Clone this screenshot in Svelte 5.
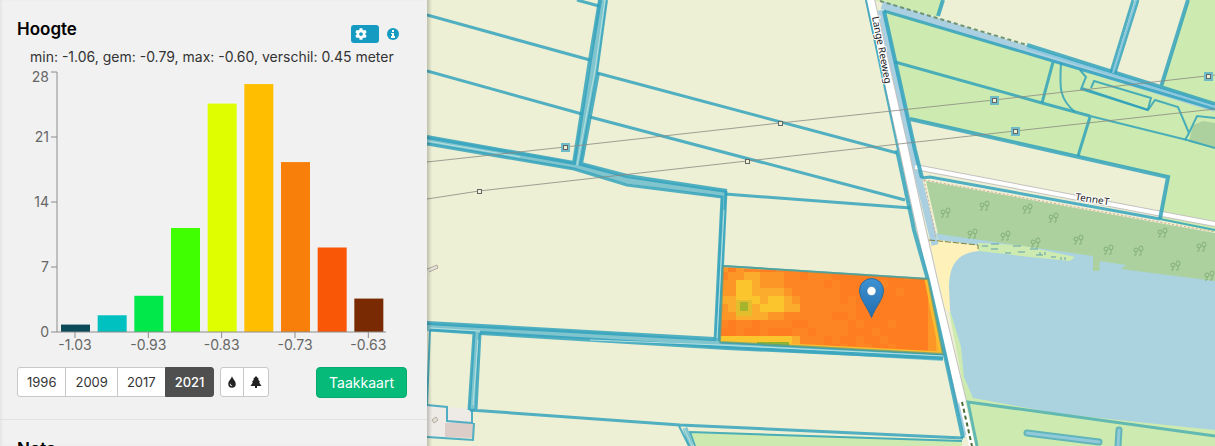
<script>
  const bars = [
    { label: '-1.03', value: 0.8, color: '#0b4a58' },
    { label: '', value: 1.8, color: '#00c0c0' },
    { label: '-0.93', value: 3.9, color: '#00e84a' },
    { label: '', value: 11.2, color: '#40ff00' },
    { label: '-0.83', value: 24.6, color: '#dfff00' },
    { label: '', value: 26.7, color: '#ffbf00' },
    { label: '-0.73', value: 18.3, color: '#f8800a' },
    { label: '', value: 9.1, color: '#f95706' },
    { label: '-0.63', value: 3.6, color: '#7a2a02' }
  ];
  const ticks = [0, 7, 14, 21, 28];
  const base = 265;
  const y = (v) => base - (v * 260) / 28;
  const barX = (i) => 61 + (i * 110) / 3;

  const years = ['1996', '2009', '2017', '2021'];
  let year = $state('2021');

  // Height raster of the selected parcel, one letter per cell.
  const tones = {
    a: '#fe8523', b: '#fe7d20', c: '#fc9626', d: '#fbac2c', e: '#fbc52e', g: '#cdbb2c', h: '#9ab52c'
  };
  const raster = [
    'cbcaabbaaabbbbbabbbbbbbbbbbb',
    'accddcccaabaaabbbbbbbbbabbdd',
    'cceedcccaaaaababbbbbabbbbbdd',
    'cceeddddcaaaaaabbbbbbbabbbdd',
    'ddeeedeedcaaaaababbbbbbbbbcd',
    'cdhgdeeeddaaaaaaabbbbbbbbbcd',
    'ccddddccaaaaaabbabbbbbbbbbcc',
    'abaabaaaabbaaaaababbbabbbbcc',
    'bbabbabbbaabaaaabbbabbbbbbcd',
    'eeeeeeeeedaaababbabbabbbbbcd',
    'eeeeeeeeedbaabbabaabbabbbbcd',
    'bbbbbbbbbbbbbbbbbbbbbbbbbbdd'
  ];
  const cells = raster.flatMap((row, r) =>
    [...row].map((t, c) => ({ x: 720 + c * 8, y: 264 + r * 8, fill: tones[t] }))
  );

  const trees = [
    [945, 213], [984, 206], [1027, 209], [1053, 218], [972, 234], [1005, 236], [1035, 243],
    [1078, 240], [1108, 250], [1138, 251], [1162, 233], [1201, 247], [1175, 266], [1209, 276]
  ];
  const pylons = [[479, 191], [747, 161], [780, 123]];
  const outlined = [[565, 147], [994, 100], [1015, 131], [1208, 76]];
</script>

<div class="app">
  <aside class="panel">
    <section class="block">
      <header class="head">
        <h2>Hoogte</h2>
        <div class="tools">
          <button class="gear" type="button" aria-label="Instellingen">
            <svg viewBox="0 0 512 512" width="12" height="12"><path fill="#fff" d="M487.4 315.7l-42.6-24.6c4.3-23.2 4.3-47 0-70.2l42.6-24.6c4.9-2.8 7.1-8.6 5.5-14-11.1-35.6-30-67.8-54.7-94.6-3.8-4.1-10-5.1-14.8-2.3L380.8 110c-17.9-15.4-38.5-27.3-60.8-35.1V25.8c0-5.6-3.9-10.5-9.4-11.7-36.7-8.2-74.3-7.8-109.2 0-5.5 1.2-9.4 6.1-9.4 11.7V75c-22.2 7.9-42.8 19.8-60.8 35.1L88.7 85.5c-4.9-2.8-11-1.9-14.8 2.3-24.7 26.7-43.6 58.9-54.7 94.6-1.7 5.4.6 11.2 5.5 14L67.3 221c-4.3 23.2-4.3 47 0 70.2l-42.6 24.6c-4.9 2.8-7.1 8.6-5.5 14 11.1 35.6 30 67.8 54.7 94.6 3.8 4.1 10 5.1 14.8 2.3l42.6-24.6c17.9 15.4 38.5 27.3 60.8 35.1v49.2c0 5.6 3.9 10.5 9.4 11.7 36.7 8.2 74.3 7.8 109.2 0 5.5-1.2 9.4-6.1 9.4-11.7v-49.2c22.2-7.9 42.8-19.8 60.8-35.1l42.6 24.6c4.9 2.8 11 1.9 14.8-2.3 24.7-26.7 43.6-58.9 54.7-94.6 1.5-5.5-.7-11.3-5.6-14.1zM256 336c-44.1 0-80-35.9-80-80s35.9-80 80-80 80 35.9 80 80-35.9 80-80 80z" /></svg>
          </button>
          <button class="info" type="button" aria-label="Informatie">
            <svg viewBox="0 0 12 12" width="12" height="12"><circle cx="6" cy="6" r="6" fill="#159bc2" /><path fill="#fff" d="M5 2H7V4H5ZM4 5H7V8H8V10H4V8H5V6H4Z" /></svg>
          </button>
        </div>
      </header>
      <p class="stats">min: -1.06, gem: -0.79, max: -0.60, verschil: 0.45 meter</p>

      <svg class="chart" viewBox="0 0 427 291" role="img" aria-label="Verdeling van de hoogte">
        {#each bars as bar, i}
          <rect x={barX(i)} y={y(bar.value)} width="29" height={base - y(bar.value)} fill={bar.color} />
          {#if bar.label}
            <path class="axis" d="M{barX(i) + 14} {base}v6" />
            <text x={barX(i) + 14} y="283" text-anchor="middle">{bar.label}</text>
          {/if}
        {/each}
        <path class="axis" d="M57 5V265H386" />
        {#each ticks as t}
          <path class="axis" d="M51 {y(t)}h6" />
          <text x="49" y={t === 28 ? 15 : y(t) + 5} text-anchor="end">{t}</text>
        {/each}
      </svg>

      <div class="controls">
        <div class="group">
          {#each years as item}
            <button type="button" class:active={item === year} onclick={() => (year = item)}>{item}</button>
          {/each}
        </div>
        <div class="group icons">
          <button type="button" aria-label="Water">
            <svg viewBox="0 0 12 14" width="10" height="12"><path fill="#222" fill-rule="evenodd" d="M6 0C7 3.500 10.500 5.500 10.500 9.300A4.500 4.500 0 0 1 1.500 9.300C1.500 5.500 5 3.500 6 0ZM3.300 9.200C3.300 11 4.500 12.200 6.200 12.200V11.200C5 11.200 4.300 10.400 4.300 9.200Z" /></svg>
          </button>
          <button type="button" aria-label="Bomen">
            <svg viewBox="0 0 12 14" width="12" height="14"><path fill="#222" d="M6 1 9 4.200H8L10.200 7.200H9L11.500 11H7V13H5V11H.5L3 7.200H1.800L4 4.200H3Z" /></svg>
          </button>
        </div>
        <button class="task" type="button">Taakkaart</button>
      </div>
    </section>
    <section class="block">
      <header class="head">
        <h2>Nota</h2>
      </header>
    </section>
  </aside>

  <main class="map">
    <svg viewBox="427 0 788 446" preserveAspectRatio="xMinYMin slice" role="img" aria-label="Kaart">
      <defs>
        <clipPath id="parcel"><path d="M723 267 928 279 943 354 720 342Z" /></clipPath>
        <linearGradient id="pin" x1="0" y1="0" x2="0" y2="1">
          <stop offset="0" stop-color="#3d92d2" /><stop offset="1" stop-color="#256eaf" />
        </linearGradient>
        <linearGradient id="edge"><stop offset="0" stop-color="#000" stop-opacity=".2" /><stop offset="1" stop-color="#000" stop-opacity="0" /></linearGradient>
        <g id="tree" fill="none" stroke="#83b078" stroke-width="1">
          <path d="M-2 4V0M-2 1a2 2 0 1 1 0-4a2 2 0 0 1 0 4M3 4V-1M3 0a2 2.500 0 1 1 0-5a2 2.500 0 0 1 0 5M-4 4h2M1 4h2" />
        </g>
      </defs>
      <rect x="427" width="788" height="446" fill="#edf0d5" />

      <g class="grass">
        <path d="M874 0H943L938 17Z" />
        <path d="M1188 0H1215V106L1161 88Z" />
        <path d="M884 10 1215 108V232L1160 220 1168 177 910 119Z" />
        <path d="M947 300 966 402 977 446H1215V270L1080 240Z" />
        <path d="M690 431 962 440V446H695Z" />
      </g>
      <path fill="#fff1ba" d="M929 238 985 246 975 300 949 312 945 308Z" />
      <path fill="#aad3df" d="M936 233 1060 250 1215 275V430L1060 414 973 398 964 377 961 347 950 310 949 285C950 267 955 253 979 251L978 245 938 240Z" />
      <path fill="#cdebb0" d="M978 243 1020 245 1075 257 1070 261 1030 257 978 251Z" />
      <path fill="#add19e" d="M926 181 1215 233V281L1121 269 1126 265 1100 261 1099 271 1093 271 1093 256 938 234Z" />
      <path fill="#add19e" d="M1193 125 1203 121 1215 123V148L1189 142Z" />
      <path class="marsh" d="M982 246h6m3-2h8m-8 5h7m7 4h6m2-7h8m-3 6h7m5-3h8m-2 6h7m8 2h5M1040 252v3m5-3v3m16 2v3m4-3v3" />
      {#each trees as [tx, ty]}
        <use href="#tree" x={tx} y={ty} />
      {/each}
      <path class="paving" d="M427 405 447 407 472 409 473 438 427 437Z" />
      <path fill="#dccdc9" d="M445 423H473V438L445 437Z" />
      <path class="shed" d="M432 420l4-3 2 3-4 3ZM427 269l10-4 1 3-9 4" />

      <!-- ditches -->
      <g class="ditch">
        <path stroke-width="8" d="M603 0 594 65 577 166" />
        <path stroke-width="7" d="M427 140 577 166 627 180 725 194" />
        <path stroke-width="5" d="M724 194 717 342" />
        <path stroke-width="8" d="M427 327 600 336 718 344 943 357" />
        <path stroke-width="6" d="M477 332 472 411" />
        <path stroke-width="5" d="M685 428 691 446" />
      </g>
      <g class="canal">
        <path d="M882 5 1215 108" stroke-width="8" />
        <path d="M881 10 912 150 919 180 935 245" stroke-width="7" />
        <path d="M944 345 966 435" stroke-width="5" />
      </g>

      <!-- roads -->
      <g class="road">
        <path class="casing" stroke-width="6" d="M915 167 1215 224" />
        <path class="surface" stroke-width="4" d="M915 167 1215 224" />
        <path class="casing" stroke-width="10" d="M869 -5 903 145 917 210 934 285 962 402" />
        <path class="surface" stroke-width="8" d="M869 -5 903 145 917 210 934 285 962 402" />
      </g>
      <path stroke="#fff" stroke-width="6" fill="none" d="M962 402 972 446" />
      <path class="track" d="M962 402 972 446" />
      <path class="track thin" d="M880 1 1027 45" />
      <path class="track sand" d="M929 240 978 245v4" />
      <path class="foot" d="M924 180 936 237M924 180 1215 232" />

      <!-- parcel boundaries -->
      <g class="parcels">
        <path d="M427 15 590 60M427 71 582 114M577 0 599 6M597 73 897 153M590 117 905 200M725 194 911 208" />
        <path class="wide" d="M600 0 590 60 574 163 427 137M598 73 581 164 627 176 727 191" />
        <path class="thin-line" d="M607 0 597 73" />
        <path d="M427 144 574 169 627 185 722 197 715 341M726 191 719 341" />
        <path class="wide" d="M427 323 714 339M480 333 727 348 943 358" />
        <path d="M430 330 474 333 469 410M480 333 476 410M470 410 680 425 963 438M720 342 943 354" />
        <path class="thin-line" d="M430 330 427 405 447 407 447 421 472 423 472 411M474 423 473 440 427 437M723 266 928 279" />
        <path class="thin-line" d="M679 426 689 446M695 446 690 432 962 441M866 0 898 150" />
        <path class="wide" d="M897 150 912 220 914 230 928 280 945 355 963 438M884 11 915 150 922 178M1160 219 1168 177 910 119" />
        <path d="M922 178 930 177 1160 219" />
        <path class="wide" d="M1027 45 1215 104M943 0 938 16M1188 0 1161 87" />
        <path d="M884 11 1053 61 1215 109M1053 62 1042 103M1090 117 1078 156M1138 0 1115 73M1133 0 1111 72" />
        <path d="M895 62 1042 103 1090 116" />
        <path class="thin-line" d="M1090 116 1187 140 1215 148M1061 63C1060 85 1058 98 1075 112" />
        <path class="thin-line" d="M1080 70 1086 77 1081 89 1148 110 1155 100 1178 107 1189 133 1197 116 1215 118M1189 133 1185 140" />
        <path class="thin-line" d="M1082 88 1148 110M1091 88 1094 81 1151 98 1148 109M1160 219 1215 230" />
      </g>
      <path class="inner" d="M1136 0 1113 73M1027 48 1215 107" />
      <path class="glint" d="M605 0 595 70 577 165M427 141 520 157M430 328 480 331M590 340 720 345 943 356M478 340 473 405M724 210 717 338M684 428 692 446" />
      <path class="soft" d="M977 446 968 402 1215 436" />
      <path class="pool-edge" d="M1027 433 1099 442M1119 430 1118 446" />
      <path class="pool" d="M1027 433 1099 442M1119 430 1118 446" />

      <!-- parcel raster -->
      <g clip-path="url(#parcel)">
        <g shape-rendering="crispEdges">
          {#each cells as cell}
            <rect x={cell.x} y={cell.y} width="8" height="8" fill={cell.fill} />
          {/each}
          <rect x="736" y="300" width="16" height="16" fill="#e2bd2d" />
          <rect x="740" y="302" width="8" height="9" fill="#a5b42c" />
          <rect x="757" y="342" width="32" height="5" fill="#8fb233" />
        </g>
        <path fill="none" stroke="#fbbd2e" stroke-width="7" d="M790 347 943 355 928 279" />
      </g>
      <path fill="none" stroke="#4e9d8e" stroke-width="2" d="M720 342 723 266 928 279 943 354Z" opacity=".7" />

      <!-- power lines -->
      <path class="power" d="M427 162 565 147 780 123 994 100 1215 75M427 199 479 191 747 161 1015 131 1215 109" />
      {#each pylons as [px, py]}
        <rect class="pylon" x={px - 1.5} y={py - 1.5} width="4" height="4" />
      {/each}
      {#each outlined as [px, py]}
        <rect class="wet" x={px - 3.5} y={py - 3.5} width="8" height="8" />
        <rect class="pylon" x={px - 1.5} y={py - 1.5} width="4" height="4" />
      {/each}

      <text class="street" transform="translate(872 17) rotate(79)">Lange Reeweg</text>
      <text class="street" transform="translate(1075 200) rotate(9)">TenneT</text>

      <path fill="url(#pin)" stroke="#2e6c97" d="M871.500 317.500C867 306 859.500 299 859.500 290.500a12 12 0 0 1 24 0C883.500 299 876 306 871.500 317.500Z" />
      <circle cx="871.500" cy="291" r="4.500" fill="#fff" stroke="#2e6c97" stroke-width=".5" />
      <rect x="427" width="5" height="446" fill="url(#edge)" />
    </svg>
  </main>
</div>

<style>
  :global(body) {
    margin: 0;
  }
  .app {
    display: grid;
    grid-template-columns: 427fr 788fr;
    height: 100vh;
    overflow: hidden;
    font-family: Inter, 'Liberation Sans', sans-serif;
    background: #f1f1f1;
  }
  .panel {
    min-width: 0;
    overflow: hidden;
    background: #f1f1f1;
    box-shadow: inset 2px 0 2px #e6e6e6;
  }
  .block {
    padding-top: 17px;
    border-bottom: 1px solid #e2e2e2;
  }
  .head {
    display: flex;
    justify-content: space-between;
    padding: 0 28px 0 17px;
    height: 29px;
  }
  h2 {
    margin: 0;
    font-size: 17px;
    line-height: 24px;
    font-weight: 600;
    color: #000;
  }
  .tools {
    display: flex;
    align-items: center;
    gap: 8px;
    padding-top: 5px;
  }
  button {
    font-family: inherit;
    margin: 0;
    cursor: pointer;
  }
  button svg {
    display: block;
  }
  .gear {
    width: 28px;
    height: 18px;
    padding: 0 4px;
    border: 0;
    border-radius: 3px;
    background: #159bc2;
  }
  .info {
    padding: 0;
    border: 0;
    background: none;
  }
  .stats {
    margin: 0;
    padding-left: 30px;
    height: 21px;
    font-size: 14px;
    line-height: 22px;
    white-space: nowrap;
    color: #333;
  }
  .chart {
    display: block;
    width: 100%;
  }
  .chart text {
    font-size: 14px;
    fill: #666;
  }
  .axis {
    fill: none;
    stroke: #8c8c8c;
    stroke-width: 1;
  }
  .controls {
    display: flex;
    align-items: flex-start;
    gap: 6px;
    padding: 9px 20px 21px 17px;
  }
  .group {
    display: flex;
  }
  .group button {
    height: 30px;
    padding: 0 9px;
    margin-left: -1px;
    border: 1px solid #c8c8c8;
    background: #fff;
    font-size: 13px;
    color: #333;
  }
  .group button:first-child {
    margin-left: 0;
    border-radius: 3px 0 0 3px;
  }
  .group button:last-child {
    border-radius: 0 3px 3px 0;
  }
  .group button.active {
    background: #4f4f4f;
    border-color: #4f4f4f;
    color: #fff;
    font-weight: 500;
  }
  .icons button {
    padding: 0 6px;
  }
  .task {
    margin-left: auto;
    height: 31px;
    padding: 0 12px;
    border: 1px solid #06a96e;
    border-radius: 4px;
    background: #06ba7a;
    color: #fff;
    font-size: 14px;
  }
  .map {
    min-width: 0;
    overflow: hidden;
    background: #edf0d5;
  }
  .map svg {
    display: block;
    width: 100%;
    height: 100%;
  }
  .grass {
    fill: #cdebb0;
  }
  .ditch path {
    fill: none;
    stroke: #80c5ce;
  }
  .canal path {
    fill: none;
    stroke: #a9cfe0;
  }
  .glint {
    fill: none;
    stroke: #b5e0e0;
    stroke-width: 1;
  }
  .road path {
    fill: none;
  }
  .casing {
    stroke: #c4c1be;
  }
  .surface {
    stroke: #fff;
  }
  .track {
    fill: none;
    stroke: #4b6b35;
    stroke-width: 2;
    stroke-dasharray: 4 3;
  }
  .thin {
    stroke: #6f9472;
  }
  .sand {
    stroke: #7b8140;
    stroke-width: 1;
    stroke-dasharray: 6 2;
  }
  .foot {
    fill: none;
    stroke: #d8a58c;
    stroke-width: 1;
    stroke-dasharray: 2 2;
  }
  .parcels path {
    fill: none;
    stroke: #2da0bb;
    stroke-opacity: 0.82;
    stroke-width: 3;
  }
  .parcels path.wide {
    stroke-width: 4;
  }
  .parcels path.thin-line {
    stroke-width: 2;
  }
  .inner {
    fill: none;
    stroke: #8cc8df;
    stroke-width: 2;
  }
  .soft {
    fill: none;
    stroke: #62b9b1;
    stroke-width: 3;
  }
  .pool-edge {
    fill: none;
    stroke: #62b5b9;
    stroke-width: 7;
    stroke-linecap: round;
  }
  .pool {
    fill: none;
    stroke: #91cadb;
    stroke-width: 3;
    stroke-linecap: round;
  }
  .marsh {
    fill: none;
    stroke: #5e9fae;
    stroke-width: 1;
  }
  .paving {
    fill: #eeeae6;
  }
  .shed {
    fill: #e4e2d8;
    stroke: #b4aa9e;
    stroke-width: 1;
  }
  .power {
    fill: none;
    stroke: #8a8a80;
    stroke-opacity: 0.8;
    stroke-width: 1;
  }
  .pylon {
    fill: #edf0d5;
    stroke: #666;
    stroke-width: 1;
  }
  .wet {
    fill: #6fbcc8;
    stroke: #6fbcc8;
    stroke-width: 1;
  }
  .street {
    font-family: 'Noto Sans', sans-serif;
    font-size: 10px;
    fill: #222;
    stroke: #fff;
    stroke-width: 2;
    paint-order: stroke;
  }
</style>
